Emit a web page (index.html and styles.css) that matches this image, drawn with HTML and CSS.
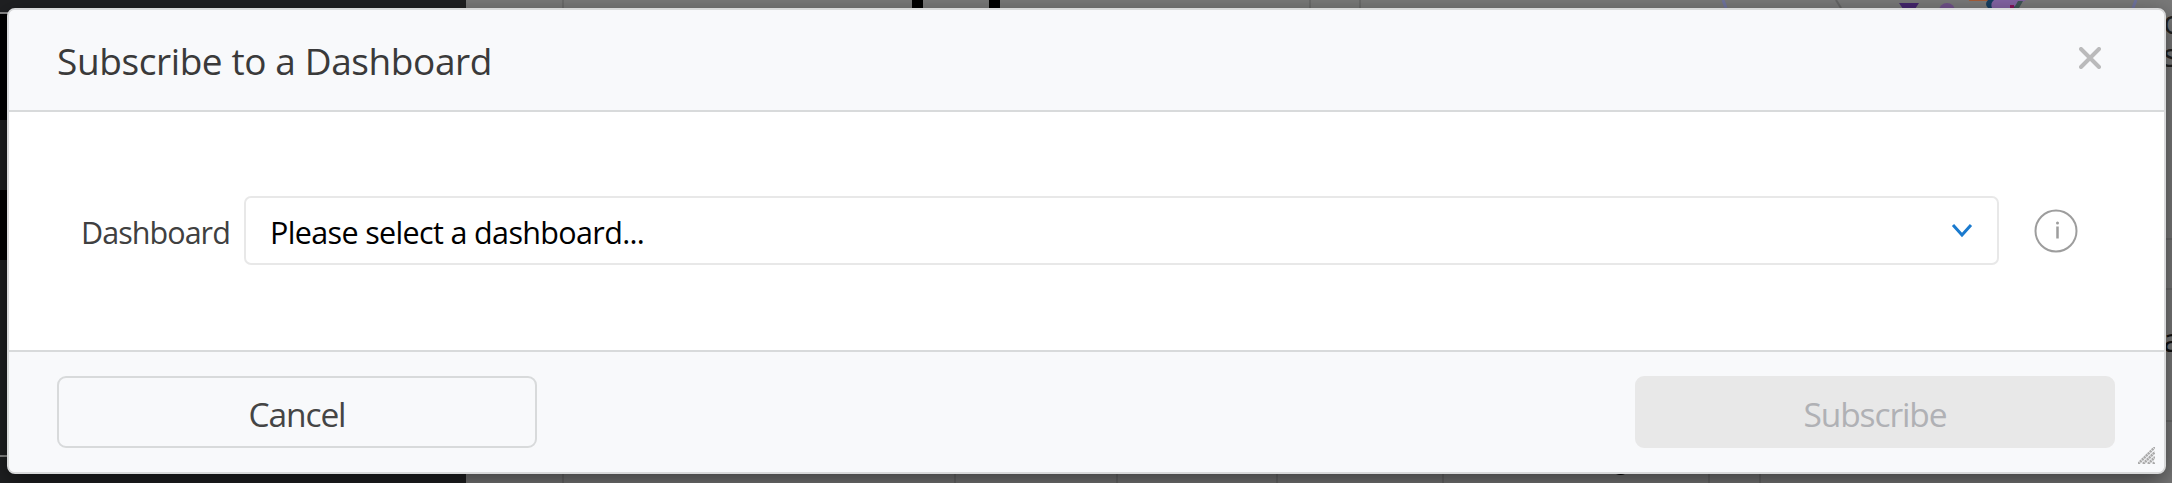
FILE: index.html
```
<!DOCTYPE html>
<html lang="en">
<head>
<meta charset="utf-8">
<title>Subscribe to a Dashboard</title>
<link rel="stylesheet" href="styles.css">
</head>
<body>
<svg class="backdrop" width="2172" height="483" viewBox="0 0 2172 483" aria-hidden="true">
  <rect width="2172" height="483" fill="#7a7a7a"/>
  <rect width="466" height="483" fill="#1f2022"/>
  <path d="M0 14h8v106H0zM0 190h8v70H0z" fill="#000"/>
  <path d="M0 13h8M0 456h8" stroke="#888" stroke-width="2"/>
  <path d="M912 0h11v8h-11zM989 0h11v8h-11z" fill="#000"/>
  <path d="M563 0v8M1310 0v8M1360 0v8M563 474v9M955 474v9M1117 474v9M1277 474v9M1443 474v9M1709 474v9M1760 474v9M2166 239h6M2166 289h6M2166 421h6" stroke="#686868" stroke-width="1.5"/>
  <path d="M1723 0l3 8M2136 0l-3 8" stroke="#7175a0" stroke-width="3"/>
  <path d="M1836 0l5 8" stroke="#666" stroke-width="2"/>
  <path d="M1899 3h20l-4 6h-12z" fill="#45266e"/>
  <circle cx="1947" cy="11" r="8" fill="#71518b"/>
  <path d="M1969 0h20v1h-20z" fill="#a55d39"/>
  <path d="M1988 0h34l-5 8h-29q-4-4 0-8z" fill="#173e60"/>
  <path d="M1994 0h32l-14 8h-20q-2-5 2-8z" fill="#8464a4"/>
  <path d="M2010 5h4v3h-4z" fill="#86135b"/>
  <path d="M2018 1h5l-4 7h-5z" fill="#3e5555"/>
  <path d="M1616 474h9q-4 2-9 0z" fill="#000"/>
</svg>
<div class="behind"><span class="b1">o</span><span class="b2">s</span><span class="b3">a</span></div>
<main class="dialog" role="dialog" aria-labelledby="title">
  <header class="head">
    <h1 class="title" id="title">Subscribe to a Dashboard</h1>
    <button class="close" aria-label="Close">
      <svg width="22" height="22" viewBox="0 0 22 22"><path d="M2 2l18 18M20 2L2 20" stroke="#bababb" stroke-width="4" stroke-linecap="round"/></svg>
    </button>
  </header>
  <section class="body">
    <span class="label">Dashboard</span>
    <div class="select" role="combobox" aria-expanded="false">
      <span class="value">Please select a dashboard...</span>
      <svg width="22" height="15" viewBox="0 0 22 15"><path d="M2 2l9 10 9-10" fill="none" stroke="#1a7ace" stroke-width="3"/></svg>
    </div>
    <svg class="info" width="44" height="44" viewBox="0 0 44 44"><circle cx="22" cy="22" r="20.5" fill="none" stroke="#9d9d9d" stroke-width="2"/><path d="M23.500 17.500v12" stroke="#9d9d9d" stroke-width="2.500"/><circle cx="23.500" cy="14" r="1.500" fill="#9d9d9d"/></svg>
  </section>
  <footer class="foot">
    <button class="btn cancel"><span>Cancel</span></button>
    <button class="btn subscribe" disabled><span>Subscribe</span></button>
    <svg class="grip" width="17" height="17" viewBox="0 0 17 17"><path d="M0 17L17 0M5 17L17 5M10 17l7-7M15 17l2-2" stroke="#aaa" stroke-width="2.600" stroke-dasharray="2.200 .6"/></svg>
  </footer>
</main>
</body>
</html>
```
FILE: styles.css
```
* { box-sizing: border-box; }
body {
  margin: 0;
  width: 2172px;
  height: 483px;
  padding: 8px 6px 9px 7px;
  overflow: hidden;
  position: relative;
  font-family: "Open Sans", "Noto Sans", sans-serif;
}
.backdrop { position: absolute; left: 0; top: 0; }
.behind { color: #222; font-size: 33px; line-height: 26px; }
.behind span { position: absolute; left: 2163px; }
.behind .b1 { top: 9px; }
.behind .b2 { top: 42px; }
.behind .b3 { top: 327px; color: #111; }
.dialog {
  position: relative;
  height: 466px;
  display: flex;
  flex-direction: column;
  background: #fff;
  border: 2px solid #d8d9da;
  border-radius: 8px;
  box-shadow: 0 8px 24px rgba(0, 0, 0, .5);
}
.head {
  height: 102px;
  display: flex;
  align-items: center;
  justify-content: space-between;
  padding: 0 63px 0 48px;
  background: #f8f9fb;
  border-bottom: 2px solid #d8dadb;
  border-radius: 6px 6px 0 0;
}
.title {
  margin: 2px 0 0;
  font-size: 37px;
  font-weight: 400;
  letter-spacing: -.4px;
  line-height: 50px;
  color: #3a3a3a;
  white-space: nowrap;
}
.close { display: flex; padding: 0; margin-bottom: 5px; border: 0; background: none; }
.body {
  height: 238px;
  display: flex;
  align-items: center;
  padding: 0 86px 1px 71px;
}
.label {
  width: 164px;
  padding: 3px 0 0 1px;
  font-size: 30.5px;
  letter-spacing: -.95px;
  line-height: 42px;
  color: #404040;
}
.select {
  width: 1755px;
  height: 69px;
  display: flex;
  align-items: center;
  justify-content: space-between;
  padding: 0 24px 0 24px;
  border: 2px solid #e8e8e8;
  border-radius: 7px;
  color: #000;
}
.value {
  margin-top: 3px;
  font-size: 30.5px;
  letter-spacing: -.65px;
  line-height: 42px;
  white-space: nowrap;
}
.info { margin-left: auto; }
.foot {
  position: relative;
  flex: 1;
  display: flex;
  justify-content: space-between;
  padding: 24px 49px 0 48px;
  background: #f8f9fb;
  border-top: 2px solid #d8dadb;
  border-radius: 0 0 6px 6px;
}
.btn {
  width: 480px;
  height: 72px;
  padding: 4px 0 0;
  border: 2px solid #d8dadb;
  border-radius: 9px;
  background: transparent;
  font: 33.5px/46px "Open Sans", "Noto Sans", sans-serif;
  letter-spacing: -1.1px;
  color: #454545;
}
.subscribe { background: #e8e8e8; border-color: #e8e8e8; color: #b0b1b5; }
.grip { position: absolute; right: 9px; bottom: 8px; }
```
